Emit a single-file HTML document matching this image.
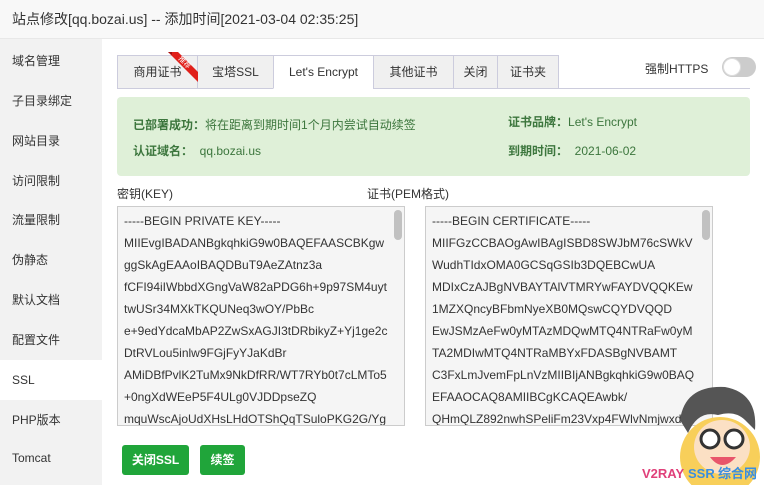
<!DOCTYPE html>
<html><head><meta charset="utf-8"><style>
*{box-sizing:border-box;margin:0;padding:0}
body{width:764px;height:485px;overflow:hidden;background:#fff;font-family:"Liberation Sans","Noto Sans CJK SC",sans-serif;font-size:12px;color:#333;position:relative}
.title{position:absolute;left:0;top:0;width:764px;height:39px;background:#f8f8f8;border-bottom:1px solid #e8e8e8;font-size:14px;line-height:38px;padding-left:12px;color:#333}
.side{position:absolute;left:0;top:39px;width:102px;height:446px;background:#f2f2f2}
.side div{position:absolute;left:12px;font-size:12px;color:#333}
.side .act{left:0;width:102px;height:40px;background:#fff;line-height:40px;padding-left:12px}
.tabs{position:absolute;top:55px;left:117px;height:34px;width:633px;border-bottom:1px solid #ccd;}
.tab{position:absolute;top:0;height:34px;border:1px solid #ccd;background:#f0f0f0;text-align:center;line-height:33px;font-size:12px;color:#333}
.tab.a{background:#fff;border-bottom-color:#fff}
.green{position:absolute;left:117px;top:97px;width:633px;height:79px;background:#dff0d8;border-radius:4px;color:#3c763d}
.green span{position:absolute;font-size:12px}
.ta{position:absolute;top:206px;height:220px;border:1px solid #ccc;background:#f5f5f5;padding:3px 0 0 6px;font-size:12px;line-height:22px;color:#333;overflow:hidden;white-space:nowrap}
.sb{position:absolute;right:2px;top:3px;width:8px;height:30px;background:#c1c1c1;border-radius:4px}
.btn{position:absolute;top:445px;height:30px;background:#20a53a;color:#fff;border-radius:3px;text-align:center;line-height:30px;font-size:12px;font-weight:bold}
</style></head><body>
<div class="title">站点修改[qq.bozai.us] -- 添加时间[2021-03-04 02:35:25]</div>
<div class="side">
<div style="top:13px">域名管理</div>
<div style="top:53px">子目录绑定</div>
<div style="top:93px">网站目录</div>
<div style="top:133px">访问限制</div>
<div style="top:172px">流量限制</div>
<div style="top:212px">伪静态</div>
<div style="top:252px">默认文档</div>
<div style="top:292px">配置文件</div>
<div class="act" style="top:321px">SSL</div>
<div style="top:372px">PHP版本</div>
<div style="top:412px">Tomcat</div>
</div>
<div class="tabs">
<div class="tab" style="left:0;width:81px">商用证书</div>
<div class="tab" style="left:80px;width:77px">宝塔SSL</div>
<div class="tab a" style="left:156px;width:101px">Let's Encrypt</div>
<div class="tab" style="left:256px;width:81px">其他证书</div>
<div class="tab" style="left:336px;width:45px">关闭</div>
<div class="tab" style="left:380px;width:62px">证书夹</div>
</div>
<svg style="position:absolute;left:168px;top:52px" width="32" height="32"><polygon points="0,0 10,0 30,20 30,30" fill="#e0201a"/><polygon points="0,0 4,0 4,3" fill="#a01010"/><text x="15" y="12" fill="#fff" font-size="7" transform="rotate(45 15 12)" text-anchor="middle" font-family="Noto Sans CJK SC">推荐</text></svg>
<div style="position:absolute;left:645px;top:60px;font-size:12px">强制HTTPS</div>
<div style="position:absolute;left:722px;top:57px;width:34px;height:20px;border-radius:10px;background:#ccc"><div style="position:absolute;left:1px;top:1px;width:18px;height:18px;border-radius:9px;background:#fff;border:1px solid #ddd"></div></div>
<div class="green">
<span style="left:16px;top:19px"><b>已部署成功：</b>将在距离到期时间1个月内尝试自动续签</span>
<span style="left:16px;top:45px"><b>认证域名：</b>&nbsp; qq.bozai.us</span>
<span style="left:391px;top:16px"><b>证书品牌：</b>Let's Encrypt</span>
<span style="left:391px;top:45px"><b>到期时间：</b>&nbsp; 2021-06-02</span>
</div>
<div style="position:absolute;left:117px;top:185px">密钥(KEY)</div>
<div style="position:absolute;left:367px;top:185px">证书(PEM格式)</div>
<div class="ta" style="left:117px;width:288px">-----BEGIN PRIVATE KEY-----<br>MIIEvgIBADANBgkqhkiG9w0BAQEFAASCBKgw<br>ggSkAgEAAoIBAQDBuT9AeZAtnz3a<br>fCFI94iIWbbdXGngVaW82aPDG6h+9p97SM4uyt<br>twUSr34MXkTKQUNeq3wOY/PbBc<br>e+9edYdcaMbAP2ZwSxAGJI3tDRbikyZ+Yj1ge2c<br>DtRVLou5inlw9FGjFyYJaKdBr<br>AMiDBfPvlK2TuMx9NkDfRR/WT7RYb0t7cLMTo5<br>+0ngXdWEeP5F4ULg0VJDDpseZQ<br>mquWscAjoUdXHsLHdOTShQqTSuloPKG2G/Yg<div class="sb"></div></div>
<div class="ta" style="left:425px;width:288px">-----BEGIN CERTIFICATE-----<br>MIIFGzCCBAOgAwIBAgISBD8SWJbM76cSWkV<br>WudhTIdxOMA0GCSqGSIb3DQEBCwUA<br>MDIxCzAJBgNVBAYTAlVTMRYwFAYDVQQKEw<br>1MZXQncyBFbmNyeXB0MQswCQYDVQQD<br>EwJSMzAeFw0yMTAzMDQwMTQ4NTRaFw0yM<br>TA2MDIwMTQ4NTRaMBYxFDASBgNVBAMT<br>C3FxLmJvemFpLnVzMIIBIjANBgkqhkiG9w0BAQ<br>EFAAOCAQ8AMIIBCgKCAQEAwbk/<br>QHmQLZ892nwhSPeliFm23Vxp4FWlvNmjwxdd<div class="sb"></div></div>
<div class="btn" style="left:122px;width:67px">关闭SSL</div>
<div class="btn" style="left:200px;width:45px">续签</div>
<svg style="position:absolute;left:640px;top:375px" width="124" height="110">
<circle cx="80" cy="82" r="40" fill="#f8cf5a"/>
<path d="M40,45 Q45,10 85,12 Q118,18 115,55 L105,45 Q95,35 78,40 Q58,35 48,58Z" fill="#555"/>
<ellipse cx="82" cy="72" rx="28" ry="27" fill="#fbe0c4"/>
<circle cx="70" cy="64" r="9" fill="#fff" stroke="#333" stroke-width="3"/>
<circle cx="94" cy="64" r="9" fill="#fff" stroke="#333" stroke-width="3"/>
<path d="M70,82 Q82,98 96,82Z" fill="#e8556a"/>
<text x="2" y="103" font-size="13" font-weight="bold" fill="#e0407a" font-family="Liberation Sans">V2RAY</text><text x="48" y="103" font-size="13" font-weight="bold" fill="#3a8ee0" font-family="Liberation Sans">SSR</text><text x="78" y="103" font-size="13" font-weight="bold" fill="#3a8ee0" font-family="Noto Sans CJK SC">综合网</text>
</svg>
</body></html>
